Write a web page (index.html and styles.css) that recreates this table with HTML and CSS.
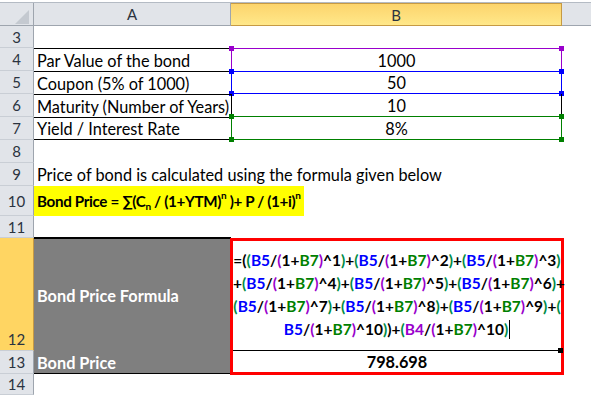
FILE: index.html
```html
<!DOCTYPE html>
<html>
<head>
<meta charset="utf-8">
<link rel="stylesheet" href="styles.css">
</head>
<body>
<div class="sheet">
  <div class="topline"></div>
  <div class="grid">
    <div class="corner"><svg width="33" height="23" viewBox="0 0 33 23"><polygon points="29,7 29,21 15,21" fill="#c4c9d0"/></svg></div>
    <div class="colhead">A</div>
    <div class="colhead sel">B</div>
    <div class="colhead blank"></div>

    <div class="rh">3</div><div class="c"></div><div class="c"></div><div class="c"></div>

    <div class="rh">4</div><div class="c a tb">Par Value of the bond</div><div class="c b bx purple"><span class="h tl"></span><span class="h tr"></span>1000</div><div class="c"></div>
    <div class="rh">5</div><div class="c a tb">Coupon (5% of 1000)</div><div class="c b bx blue"><span class="h tl"></span><span class="h tr"></span><span class="h bl"></span><span class="h br"></span>50</div><div class="c"></div>
    <div class="rh">6</div><div class="c a tb">Maturity (Number of Years)</div><div class="c b sides">10</div><div class="c"></div>
    <div class="rh">7</div><div class="c a tb bb">Yield / Interest Rate</div><div class="c b bx green"><span class="h tl"></span><span class="h tr"></span><span class="h bl"></span><span class="h br"></span>8%</div><div class="c"></div>

    <div class="rh">8</div><div class="c"></div><div class="c"></div><div class="c"></div>
    <div class="rh">9</div><div class="c a over">Price of bond is calculated using the formula given below</div><div class="c"></div><div class="c"></div>
    <div class="rh">10</div><div class="c a over"><span class="hl">Bond Price = ∑(C<sub>n</sub> / (1+YTM)<sup>n</sup> )+ P / (1+i)<sup>n</sup></span></div><div class="c"></div><div class="c"></div>
    <div class="rh">11</div><div class="c bbk"></div><div class="c"></div><div class="c"></div>

    <div class="rh rsel">12</div>
    <div class="c dark mid">Bond Price Formula</div>
    <div class="redbox">
      <div class="formula">
        <div class="fl"><span class="k">=(</span><span class="g">(</span><span class="bl">B5</span>/<span class="p">(</span>1+<span class="gr">B7</span><span class="p">)</span>^1<span class="g">)</span>+<span class="g">(</span><span class="bl">B5</span>/<span class="p">(</span>1+<span class="gr">B7</span><span class="p">)</span>^2<span class="g">)</span>+<span class="g">(</span><span class="bl">B5</span>/<span class="p">(</span>1+<span class="gr">B7</span><span class="p">)</span>^3<span class="g">)</span></div>
        <div class="fl">+<span class="g">(</span><span class="bl">B5</span>/<span class="p">(</span>1+<span class="gr">B7</span><span class="p">)</span>^4<span class="g">)</span>+<span class="g">(</span><span class="bl">B5</span>/<span class="p">(</span>1+<span class="gr">B7</span><span class="p">)</span>^5<span class="g">)</span>+<span class="g">(</span><span class="bl">B5</span>/<span class="p">(</span>1+<span class="gr">B7</span><span class="p">)</span>^6<span class="g">)</span>+</div>
        <div class="fl"><span class="g">(</span><span class="bl">B5</span>/<span class="p">(</span>1+<span class="gr">B7</span><span class="p">)</span>^7<span class="g">)</span>+<span class="g">(</span><span class="bl">B5</span>/<span class="p">(</span>1+<span class="gr">B7</span><span class="p">)</span>^8<span class="g">)</span>+<span class="g">(</span><span class="bl">B5</span>/<span class="p">(</span>1+<span class="gr">B7</span><span class="p">)</span>^9<span class="g">)</span>+<span class="g">(</span></div>
        <div class="fl"><span class="bl">B5</span>/<span class="p">(</span>1+<span class="gr">B7</span><span class="p">)</span>^10<span class="g">)</span>)+<span class="g">(</span><span class="pu">B4</span>/<span class="p">(</span>1+<span class="gr">B7</span><span class="p">)</span>^10<span class="g">)</span><span class="caret"></span></div>
        <span class="fill"></span>
      </div>
      <div class="value">798.698</div>
    </div>
    <div class="c"></div>

    <div class="rh">13</div>
    <div class="c dark bbk">Bond Price</div>
    <div class="c"></div>

    <div class="rh">14</div><div class="c"></div><div class="c"></div><div class="c"></div>
  </div>
</div>
</body>
</html>
```

FILE: styles.css
```css
* { box-sizing: border-box; }
body { margin: 0; background: #fff; font-family: Lato, "Liberation Sans", sans-serif; }
.sheet { width: 591px; height: 396px; overflow: hidden; }
.topline { height: 3px; border-bottom: 1px solid #b4bbc4; background: #fff; }
.grid {
  display: grid;
  grid-template-columns: 34px 197px 331px 29px;
  grid-template-rows: 23px 22px 23px 23px 23px 23px 23px 23px 30px 22px 113px 23px 21px;
}
.corner { background: #e1e4e9; border-right: 1px solid #9ea5ae; border-bottom: 1px solid #9ea5ae; display: flex; }
.colhead {
  background: #e1e4e9; border-right: 1px solid #9ea5ae; border-bottom: 1px solid #9ea5ae;
  display: flex; align-items: center; justify-content: center;
  font-size: 15px; color: #2b3340;
}
.colhead.sel { background: linear-gradient(#fcd46c, #ffe88a); border: 1px solid #c69a44; border-left: none; }
.colhead.blank { border-right: none; }
.rh {
  background: #e1e4e9; border-right: 1px solid #9ea5ae; border-bottom: 1px solid #c9ced5;
  display: flex; align-items: center; justify-content: center;
  font-size: 15px; color: #2b3340;
}
.rh.rsel { background: #ffd562; border-right-color: #c69a44; align-items: flex-end; padding-bottom: 2px; }
.c { position: relative; display: flex; align-items: center; font-size: 16.3px; color: #000; white-space: nowrap; }
.a { padding-left: 3px; }
.b { justify-content: center; }
.tb { border-top: 1px solid #000; }
.bb { border-bottom: 1px solid #000; }
.bbk { border-bottom: 1px solid #000; }
.over { overflow: visible; z-index: 1; }
.bx.purple { border: 1px solid #9900cc; border-bottom: none; }
.bx.blue { border: 1px solid #0000ff; }
.bx.green { border: 1px solid #008000; margin-top: -1px; }
.sides { border-left: 1px solid #000; border-right: 1px solid #000; }
.h { position: absolute; width: 5px; height: 5px; background: currentColor; }
.purple .h { color: #9900cc; }
.blue .h { color: #0000ff; }
.green .h { color: #008000; }
.h.tl { left: -3px; top: -3px; }
.h.tr { right: -3px; top: -3px; }
.h.bl { left: -3px; bottom: -3px; }
.h.br { right: -3px; bottom: -3px; }
.hl {
  display: block; align-self: stretch;
  background: #ffff00; font-weight: bold; font-size: 15.2px; letter-spacing: -0.35px;
  line-height: 30px; padding: 0 3px; margin-left: -3px;
}
.hl sub { font-size: 10px; vertical-align: -3px; line-height: 0; }
.hl sup { font-size: 10px; vertical-align: 8px; line-height: 0; }
.dark { background: #7f7f7f; color: #fff; font-weight: bold; padding-left: 3px; }
.mid { border-top: 1px solid #000; }
.redbox {
  grid-row: span 2;
  border: 3px solid #ff0000;
  margin-left: -1px; margin-right: -2px; margin-bottom: -1px;
  display: flex; flex-direction: column;
  position: relative; z-index: 2;
}
.formula { flex: 1; border-bottom: 1px solid #000; padding-top: 8px; position: relative; font-weight: bold; font-size: 15.5px; }
.fl { height: 23px; line-height: 23px; text-align: center; white-space: nowrap; }
.k { color: #000; }
.g { color: #008c46; }
.p { color: #9900cc; }
.bl { color: #0000ff; }
.gr { color: #008000; }
.pu { color: #9900cc; }
.caret { display: inline-block; width: 1px; height: 19px; background: #000; vertical-align: -4px; margin-left: 1px; }
.fill { position: absolute; right: -2px; bottom: -3px; width: 5px; height: 5px; background: #000; }
.value { height: 21px; display: flex; align-items: center; justify-content: center; font-weight: bold; font-size: 16.3px; }
```
